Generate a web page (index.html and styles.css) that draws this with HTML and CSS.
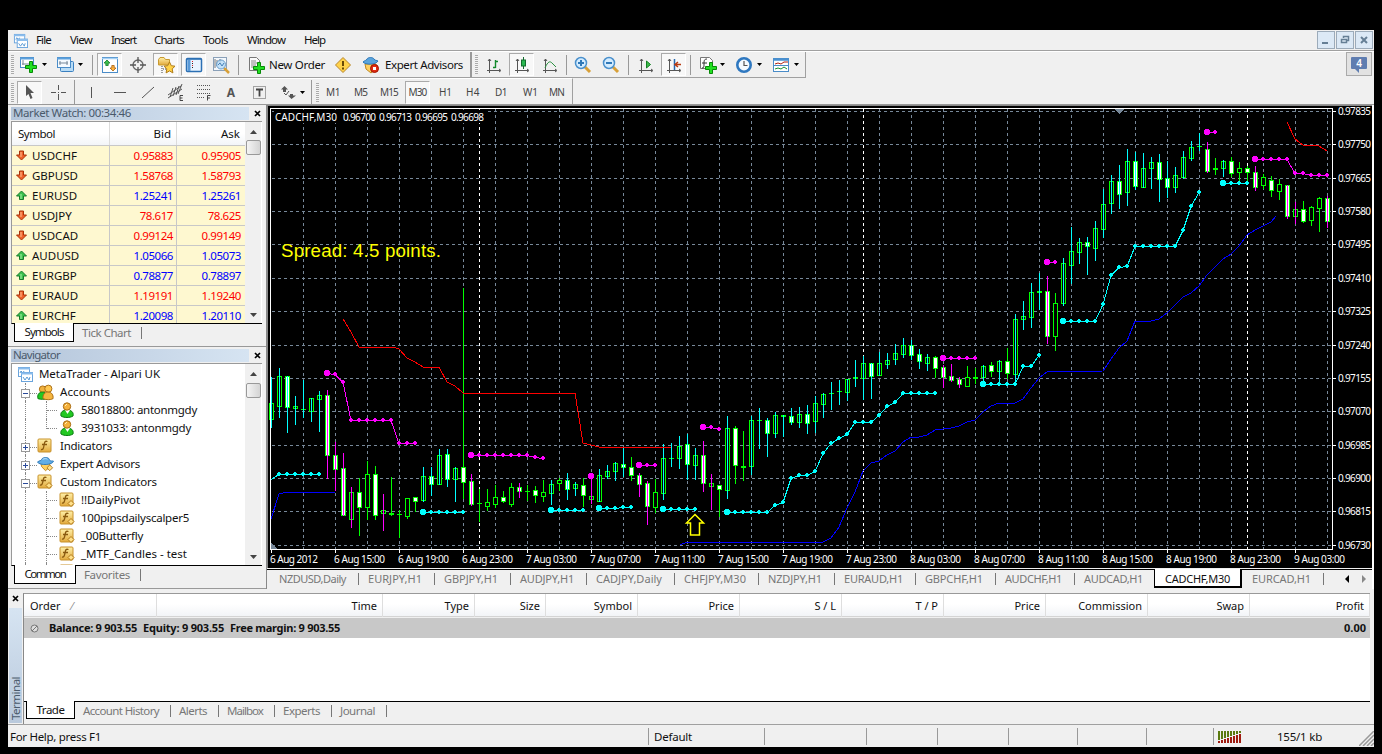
FILE: index.html
```html
<!DOCTYPE html>
<html lang="en">
<head>
<meta charset="utf-8">
<title>MetaTrader - CADCHF,M30</title>
<link rel="stylesheet" href="styles.css">
</head>
<body>
<svg class="defs" width="0" height="0" aria-hidden="true">
  <defs>
    <linearGradient id="gold" x1="0" y1="0" x2="0" y2="1"><stop offset="0" stop-color="#fff0a8"/><stop offset="1" stop-color="#e2a93c"/></linearGradient>
    <symbol id="i-down" viewBox="0 0 11 11"><path d="M3.5 1h4v4h3L5.500 10 .5 5h3z" fill="#f0622a" stroke="#a83208"/><path d="M5 2v5" stroke="#ffc090"/></symbol>
    <symbol id="i-up" viewBox="0 0 11 11"><path d="M3.500 9.500h4V6h3L5.500 1 .5 6h3z" fill="#3cc04e" stroke="#177a2a"/><path d="M5 4v5" stroke="#a8f0a8"/></symbol>
    <symbol id="i-plus" viewBox="0 0 12 12"><path d="M4.500.5h3v4h4v3h-4v4h-3v-4h-4v-3h4z" fill="#22e022" stroke="#078a07"/></symbol>
    <symbol id="i-app" viewBox="0 0 16 16"><rect x="1.500" y="1.500" width="11" height="9" fill="#fff" stroke="#6aa4dc"/><path d="M1 2.500h12" stroke="#8abcec" stroke-width="2"/><path d="M3 7l1-2 2 2 1-2" stroke="#5b9bd5" fill="none"/><rect x="4.500" y="6.500" width="11" height="9" fill="#fff" stroke="#6aa4dc"/><path d="M4 7.500h12" stroke="#8abcec" stroke-width="2"/><path d="M6 11l2 3 2-3 2 3 1-3" stroke="#5b9bd5" fill="none"/></symbol>
    <symbol id="i-man" viewBox="0 0 16 16"><path d="M2 14c-1-4 2-6 6-6s7 2 6 6c-3 2-9 2-12 0z" fill="#22c822" stroke="#0b7a12"/><path d="M6 8l2.500 4L11 8z" fill="#fff"/><circle cx="8" cy="4.500" r="3.700" fill="#f5b13c" stroke="#a86a10"/><path d="M6 4l2-2" stroke="#fff0b8"/></symbol>
    <symbol id="i-people" viewBox="0 0 18 17"><circle cx="6" cy="5" r="3.500" fill="#f0b03c" stroke="#a86a10"/><path d="M1 15c-1-4 1-7 5-7 3 0 5 3 5 7-3 1-7 1-10 0z" fill="#22c822" stroke="#0b7a12"/><circle cx="12" cy="4.500" r="3.800" fill="#ffc850" stroke="#a86a10"/><path d="M6.500 15c-1-4 2-7 5-7 4 0 6 3 5.500 7-3 1.500-7 1.500-10.500 0z" fill="#f5b640" stroke="#a86a10"/></symbol>
    <symbol id="i-f" viewBox="0 0 16 16"><rect x="1" y="1" width="13" height="13" rx="1" fill="url(#gold)" stroke="#c8922c"/><path d="M10.500 3.500c-3-1-3 1-3.500 4s-1 4.500-3 4M5 6.500h5" stroke="#8a5a10" fill="none" stroke-width="1.300"/></symbol>
    <symbol id="i-fc" viewBox="0 0 16 16"><rect x="1" y="1" width="13" height="13" rx="1" fill="url(#gold)" stroke="#c8922c"/><path d="M9.500 3.500c-3-1-3 1-3.500 3.500s-1 4.500-3 4M4 6.500h5" stroke="#8a5a10" fill="none" stroke-width="1.300"/><path d="M12 8.500l3 3-3 3-3-3z" fill="#ffe08a" stroke="#b07818"/></symbol>
    <symbol id="i-ea" viewBox="0 0 18 17"><path d="M4 7h9l1 4-5 4-4-4z" fill="#ffd060" stroke="#c08820"/><path d="M0.500 6c2-2 4-1 4.500-3s7-3 8 0 3 1 4.500 2c-1 4-14 5-17 1z" fill="#62aee6" stroke="#2f78b8"/><path d="M6 3c2-1 4-1 5 0" stroke="#c4e6ff" fill="none"/><path d="M13.500 9l3 3-3 3-3-3z" fill="#ffe08a" stroke="#b07818"/></symbol>
    <symbol id="i-axes" viewBox="0 0 18 18"><path d="M4.500 3v14M2 14.500h13M3 5l1.500-2L6 5M14 13l2 1.500-2 1.500" fill="none" stroke="#555"/></symbol>
    <symbol id="i-dd" viewBox="0 0 5 3"><path d="M0 0h5L2.500 3z" fill="#000"/></symbol>
    <symbol id="i-x" viewBox="0 0 7 7"><path d="M1 1l5 5M6 1L1 6" stroke="#000" stroke-width="1.700"/></symbol>
  </defs>
</svg>

<div class="window">
  <div class="menubar">
    <svg class="menu-icon" width="15" height="15"><use href="#i-app"/></svg>
    <div class="menus">
      <span data-w="15">File</span><span data-w="22">View</span><span data-w="25">Insert</span><span data-w="30">Charts</span><span data-w="25">Tools</span><span data-w="38">Window</span><span data-w="21">Help</span>
    </div>
    <div class="winbtns">
      <svg width="18" height="18"><rect x=".5" y=".5" width="17" height="17"/><path d="M5 12h6" stroke-width="2"/></svg>
      <svg width="18" height="18"><rect x=".5" y=".5" width="17" height="17"/><path d="M7.500 7V5.500h5v4H11M5.500 8.500h5v3h-5z" stroke-width="1.500"/></svg>
      <svg width="18" height="18"><rect x=".5" y=".5" width="17" height="17"/><path d="M6 6l6 6M12 6l-6 6" stroke-width="2"/></svg>
    </div>
  </div>

  <div class="toolzone">
    <div class="toolbars">
      <div class="toolbar main-tools">
        <i class="grip"></i>
        <svg width="18" height="18"><rect x=".5" y="1.500" width="13" height="10" fill="#fff" stroke="#4a8cc8"/><path d="M0 2.500h14" stroke="#5ca0dc" stroke-width="2"/><path d="M3 4v5M2 8h9M9 6l2 2" stroke="#789" fill="none"/><use href="#i-plus" x="5" y="5" width="12" height="12"/></svg>
        <svg class="dd" width="5" height="3"><use href="#i-dd"/></svg>
        <svg width="18" height="18"><rect x="3.500" y="5.500" width="13" height="10" rx="1" fill="#b8dcf6" stroke="#3a80c0"/><rect x=".5" y="1.500" width="13" height="10" fill="#f4faff" stroke="#4a8cc8"/><path d="M0 2.500h14" stroke="#5ca0dc" stroke-width="2"/><path d="M2 7h9M3 5v4M10 5v4" stroke="#789"/></svg>
        <svg class="dd" width="5" height="3"><use href="#i-dd"/></svg>
        <i class="sep"></i>
        <b class="pressed"><svg width="18" height="18"><rect x="1.500" y="1.500" width="15" height="15" fill="#fff" stroke="#4a8cc8"/><path d="M1 2.500h16" stroke="#a4d0f4" stroke-width="1.500"/><path d="M6 4l3 3H7.200v2.500H4.800V7H3z" fill="#3cc04e" stroke="#177a2a" stroke-width=".8"/><path d="M12 15l3-3h-1.800V9.500h-2.400V12H9z" fill="#ffb43c" stroke="#a86010" stroke-width=".8"/></svg></b>
        <svg width="18" height="18"><circle cx="9" cy="9" r="5" fill="none" stroke="#666" stroke-width="1.300"/><path d="M9 1v6M9 11v6M1 9h6M11 9h6" stroke="#555" stroke-width="1.300"/></svg>
        <b class="pressed"><svg width="20" height="18"><path d="M2.500 9V3.500l1.500-2h4l1.500 2h4V9z" fill="url(#gold)" stroke="#c89a30"/><path d="M6 10v7M7 13h4" stroke="#444" stroke-dasharray="1 1"/><path d="M13.500 6l1.800 3.700 3.700.5-2.800 2.700.7 4-3.400-2-3.400 2 .7-4L8 10.200l3.700-.5z" fill="#ffd24a" stroke="#b07c18"/></svg></b>
        <b class="pressed"><svg width="18" height="18"><rect x="1.500" y="2.500" width="15" height="13" rx="1" fill="#e8f4ff" stroke="#2c70b4" stroke-width="1.500"/><path d="M2 3h14" stroke="#2c70b4" stroke-width="1.500"/><path d="M4 4v11" stroke="#5a9ad8" stroke-width="3"/><path d="M7.500 5v1M7.500 9v1" stroke="#e02020"/><path d="M7.500 7v1M7.500 11v1" stroke="#222"/></svg></b>
        <svg width="20" height="18"><rect x="1.500" y="1.500" width="13" height="13" fill="#f4f8fc" stroke="#8aa0b8"/><path d="M3 3v9M5 4v6M8 3v4" stroke="#777"/><path d="M12 12l5 5" stroke="#d8a038" stroke-width="2.500"/><circle cx="9" cy="8.500" r="4.500" fill="#b8dcf8" fill-opacity=".8" stroke="#6a9cc8"/><path d="M6 9l2-2 2 3 2-3" stroke="#4580b8" fill="none"/></svg>
        <i class="sep"></i>
        <svg width="18" height="18"><path d="M1.500 1.500h7l3 3v10h-10z" fill="#fafafa" stroke="#777"/><path d="M3 5h5M3 7h7M3 9h5M3 11h4" stroke="#888"/><use href="#i-plus" x="5" y="6" width="12" height="12"/></svg>
        <span data-w="56">New Order</span>
        <svg width="18" height="18"><path d="M9 1.500L16.500 9 9 16.500 1.500 9z" fill="#ffd24a" stroke="#b8862c" stroke-linejoin="round"/><path d="M9 5v5M9 11.500v2" stroke="#5a3c00" stroke-width="1.800"/></svg>
        <svg width="18" height="18"><path d="M3 8h11l1 4-6 5-5-4z" fill="#ffd060" stroke="#c08820"/><path d="M1 6c2-2 3-1 4-3s6-2 7 0 3 1 4 2c-2 4-13 4-15 1z" fill="#5aa4dc" stroke="#2f78b8"/><circle cx="12.500" cy="12.500" r="4" fill="#e02a10" stroke="#a01400"/><path d="M11 11h3v3h-3z" fill="#fff"/></svg>
        <span data-w="78">Expert Advisors</span>
        <i class="sep thick"></i>
        <i class="grip"></i>
        <svg width="18" height="18"><use href="#i-axes"/><path d="M10.500 4v8M8 11.500h2.500M10.500 5.500H13" stroke="#128a2c" stroke-width="1.400"/></svg>
        <b class="pressed"><svg width="18" height="18"><use href="#i-axes"/><path d="M10.500 1v12" stroke="#126a2c"/><rect x="8.500" y="4" width="4" height="6" fill="#28b850" stroke="#126a2c"/></svg></b>
        <svg width="18" height="18"><use href="#i-axes"/><path d="M4 12c3-7 5-7 7-5l4 4" stroke="#2a9040" fill="none"/></svg>
        <i class="sep"></i>
        <svg width="18" height="18"><path d="M11 11l5 5" stroke="#d8a038" stroke-width="3"/><circle cx="7" cy="7" r="5.500" fill="#d4ecff" stroke="#4a90cc" stroke-width="1.500"/><path d="M4 7h6M7 4v6" stroke="#2f78b8" stroke-width="2"/></svg>
        <svg width="18" height="18"><path d="M11 11l5 5" stroke="#d8a038" stroke-width="3"/><circle cx="7" cy="7" r="5.500" fill="#d4ecff" stroke="#4a90cc" stroke-width="1.500"/><path d="M4 7h6" stroke="#2f78b8" stroke-width="2"/></svg>
        <i class="sep"></i>
        <svg width="18" height="18"><use href="#i-axes"/><path d="M9.500 5v7l4-3.500z" fill="#3cb84a" stroke="#128020"/></svg>
        <b class="pressed"><svg width="18" height="18"><use href="#i-axes"/><path d="M9.500 3v11" stroke="#2468b0" stroke-width="1.500"/><path d="M10 8.500h6M13 6l-3 2.500 3 2.500" stroke="#b83a10" stroke-width="1.500" fill="none"/></svg></b>
        <i class="sep"></i>
        <svg width="18" height="18"><path d="M1.500 1.500h9l3 3v8h-12z" fill="#fff" stroke="#777"/><path d="M8 3c-3 0-3 2-3 5s0 4-2 4M3 7h5" stroke="#333" fill="none"/><use href="#i-plus" x="6" y="6" width="12" height="12"/></svg>
        <svg class="dd" width="5" height="3"><use href="#i-dd"/></svg>
        <svg width="18" height="18"><circle cx="9" cy="9" r="6.700" fill="#f4faff" stroke="#2f78c0" stroke-width="2.600"/><path d="M9 5v4.500h3.500" stroke="#555" fill="none" stroke-width="1.200"/></svg>
        <svg class="dd" width="5" height="3"><use href="#i-dd"/></svg>
        <svg width="18" height="18"><rect x="1.500" y="2.500" width="15" height="13" fill="#fff" stroke="#4a8cc8"/><path d="M1 3.500h16" stroke="#4a90d0" stroke-width="2.500"/><path d="M3 8l3-1 3 1 3-2h4" stroke="#b02010" fill="none"/><path d="M1 9.500h16" stroke="#4a8cc8"/><path d="M3 13l3-1 3 1 3-2 3 2" stroke="#189030" fill="none"/></svg>
        <svg class="dd" width="5" height="3"><use href="#i-dd"/></svg>
      </div>

      <div class="toolbar line-tools">
        <i class="grip"></i>
        <b class="pressed"><svg width="18" height="18"><path d="M5 2l8 8H9.500l2 5-2 1-2-5L5 13z" fill="#555"/></svg></b>
        <svg width="18" height="18"><path d="M9.500 2v5M9.500 11v6M2 9.500h5M12 9.500h5M9 9.500h1" stroke="#555"/></svg>
        <i class="sep"></i>
        <svg width="18" height="18"><path d="M9.500 4v11" stroke="#555"/></svg>
        <svg width="18" height="18"><path d="M3 9.500h12" stroke="#555"/></svg>
        <svg width="18" height="18"><path d="M3 15L15 4" stroke="#555"/></svg>
        <svg width="18" height="18"><path d="M1 12L14 3M1 15L15 6M3 14L6 5M6 13l3-9M9 12l3-9M11 11l4-10" stroke="#555"/><path d="M16 12.500h-3v5h3M13 15h2.500" stroke="#444" fill="none"/></svg>
        <svg width="18" height="18"><path d="M2 2.500h14M2 6.500h14M2 10.500h14M2 14.500h8" stroke="#555" stroke-dasharray="1 1"/><path d="M15.500 12.500h-3v5M12.500 15h2.500" stroke="#444" fill="none"/></svg>
        <em>A</em>
        <svg width="18" height="18"><rect x="2.500" y="3.500" width="12" height="12" fill="none" stroke="#555" stroke-dasharray="1 1"/><path d="M5 6.500h7M8.500 6v7.500" stroke="#444" stroke-width="1.800"/></svg>
        <svg width="18" height="18"><path d="M5.500 3L9 6.500H7V9H4V6.500H2zM12.500 16L9 12.500h2V11h3v1.500h3z" fill="#555"/><path d="M5 10l2 2 3-4" stroke="#555" fill="none"/></svg>
        <svg class="dd" width="5" height="3"><use href="#i-dd"/></svg>
        <i class="sep"></i>
        <i class="grip"></i>
        <span data-w="14">M1</span><span data-w="13">M5</span><span data-w="18">M15</span><b class="pressed"><span data-w="18">M30</span></b><span data-w="13">H1</span><span data-w="14">H4</span><span data-w="12">D1</span><span data-w="15">W1</span><span data-w="15">MN</span>
      </div>
    </div>
    <div class="alerts"><svg width="16" height="17"><path d="M1 0h14q1 0 1 1v10q0 1-1 1H8l0 4-4-4H1q-1 0-1-1V1q0-1 1-1z" fill="#5f7db0"/><text x="8" y="10" text-anchor="middle">4</text></svg></div>
  </div>

  <div class="workspace">
    <div class="sidebar">
      <section class="panel watch">
        <header><h2><span data-w="118">Market Watch: 00:34:46</span></h2><svg width="7" height="7"><use href="#i-x"/></svg></header>
        <div class="box">
          <div class="list">
            <div class="row head"><span><span data-w="37">Symbol</span></span><span>Bid</span><span>Ask</span></div>
            <div id="quotes"></div>
          </div>
          <div class="scroll"><svg width="7" height="4"><path d="M3.500 0L7 4H0z"/></svg><i></i><svg width="7" height="4"><path d="M0 0h7L3.500 4z"/></svg></div>
        </div>
        <footer><span class="on"><span data-w="39">Symbols</span></span><span class="off"><span data-w="49">Tick Chart</span></span></footer>
      </section>
      <section class="panel nav">
        <header><h2><span data-w="47">Navigator</span></h2><svg width="7" height="7"><use href="#i-x"/></svg></header>
        <div class="box">
          <div class="tree" id="tree"></div>
          <div class="scroll"><svg width="7" height="4"><path d="M3.500 0L7 4H0z"/></svg><i></i><svg width="7" height="4"><path d="M0 0h7L3.500 4z"/></svg></div>
        </div>
        <footer><span class="on"><span data-w="41">Common</span></span><span class="off"><span data-w="46">Favorites</span></span></footer>
      </section>
    </div>
    <div class="chartpane">
      <svg id="chart" width="1105" height="463" viewBox="267 105 1105 463"></svg>
      <div class="charttabs">
        <span data-w="67">NZDUSD,Daily</span><span data-w="54">EURJPY,H1</span><span data-w="54">GBPJPY,H1</span><span data-w="54">AUDJPY,H1</span><span data-w="66">CADJPY,Daily</span><span data-w="62">CHFJPY,M30</span><span data-w="54">NZDJPY,H1</span><span data-w="59">EURAUD,H1</span><span data-w="58">GBPCHF,H1</span><span data-w="57">AUDCHF,H1</span><span data-w="59">AUDCAD,H1</span><span class="current"><span data-w="65">CADCHF,M30</span></span><span data-w="59">EURCAD,H1</span>
        <svg width="22" height="8"><path d="M4 0v8L0 4z" fill="#000"/><path d="M17 0v8l4-4z" fill="#888"/></svg>
      </div>
    </div>
  </div>

  <div class="terminal">
    <div class="spine"><svg width="7" height="7"><use href="#i-x"/></svg><div><span>Terminal</span></div></div>
    <div class="orders">
      <div class="cols"><span>Order<i>⁄</i></span><span>Time</span><span>Type</span><span>Size</span><span>Symbol</span><span>Price</span><span>S / L</span><span>T / P</span><span>Price</span><span>Commission</span><span>Swap</span><span>Profit</span></div>
      <div class="balance"><svg width="9" height="9"><circle cx="4.500" cy="4.500" r="3.500"/><path d="M2 7l5-5"/></svg><span data-w="88">Balance: 9 903.55</span><span data-w="81">Equity: 9 903.55</span><span data-w="110">Free margin: 9 903.55</span><span>0.00</span></div>
      <div class="blank"></div>
      <div class="termtabs"><span class="on"><span data-w="28">Trade</span></span><span data-w="76">Account History</span><span data-w="28">Alerts</span><span data-w="36">Mailbox</span><span data-w="37">Experts</span><span data-w="35">Journal</span></div>
    </div>
  </div>

  <div class="status">
    <span><b data-w="91">For Help, press F1</b></span><span><b data-w="38">Default</b></span><span></span><span></span><span></span><span></span><span></span><span></span>
    <span class="net"><svg id="bars" width="24" height="13"></svg><b data-w="45">155/1 kb</b><svg class="corner" width="15" height="15"><path d="M0 15L15 0M4 15L15 4M8 15l7-7M12 15l3-3" stroke="#999" stroke-width="1.500"/></svg></span>
  </div>
</div>
<script src="app.js"></script>
</body>
</html>
```
FILE: styles.css
```css
* { box-sizing: border-box; }
body { margin: 0; background: #000; font: 11.5px/16px "Noto Sans", "Open Sans", sans-serif; color: #111; overflow: hidden; height: 754px; }
svg { display: block; flex: none; }
i, em, b { font-style: normal; font-weight: normal; }
[data-w] { white-space: nowrap; display: inline-block; flex: none; }
.defs { position: absolute; }
.window { margin: 30px 8px 0; width: 1366px; height: 717px; background: #f0f0f0; display: flex; flex-direction: column; overflow: hidden; }

.menubar { height: 21px; border-bottom: 1px solid #a0a0a0; display: flex; align-items: center; flex: none; }
.menu-icon { margin-left: 5px; }
.menus { display: grid; grid-template-columns: 34px 41px 43px 49px 44px 57px 30px; margin-left: 8px; flex: 1; }
.winbtns { display: flex; gap: 1px; padding-right: 1px; }
.winbtns svg { fill: none; stroke: #667f95; }
.winbtns rect { fill: #dce9f6; stroke: #9cabba; }

.toolzone { height: 54px; border-top: 1px solid #fff; border-bottom: 1px solid #999; display: flex; justify-content: space-between; flex: none; }
.toolbar { display: grid; justify-items: start; align-items: center; padding-left: 3px; border-right: 1px solid #a0a0a0; width: max-content; }
.main-tools { height: 26px; border-bottom: 1px solid #a0a0a0; grid-template-columns: 9px 22px 15px 21px 14px 5px 32px 24px 28px 31px 26px 10px 21px 65px 28px 23px 85px 5px 10px 24px 32px 25px 8px 28px 26px 9px 24px 29px 9px 21px 15px 22px 15px 22px 11px; }
.line-tools { height: 26px; border-top: 1px solid #fff; padding-top: 1px; grid-template-columns: 6px 32px 25px 8px 29px 28px 28px 28px 27px 29px 28px 21px 11px 5px 10px 28px 26px 25px 34px 27px 29px 28px 26px 23px; font-size: 10px; color: #444; }
.grip { width: 3px; height: 19px; background: repeating-linear-gradient(#aaa 0 1px, #f4f4f4 1px 2px); }
.sep { width: 1px; height: 20px; background: #999; }
.sep.thick { width: 2px; height: 25px; }
.line-tools .sep { height: 24px; }
.pressed { width: 25px; height: 23px; border: 1px solid #aaa; border-right-color: #fff; border-bottom-color: #fff; background: #f8f8f8; display: flex; align-items: center; justify-content: center; }
.line-tools em { width: 18px; text-align: center; font: bold 12px "Noto Sans", sans-serif; color: #555; }
.alerts { width: 26px; height: 24px; margin: 0 2px 0 0; border: 1px solid #aaa; background: #e2e2e2; display: flex; justify-content: center; padding-top: 4px; }
.alerts svg { overflow: visible; }
.alerts text { font: 600 10px "Noto Sans", sans-serif; fill: #fff; }

.workspace { display: flex; height: 484px; flex: none; }
.sidebar { width: 259px; border-right: 1px solid #888; display: flex; flex-direction: column; }
.panel { display: flex; flex-direction: column; padding: 2px 3px 0; border-bottom: 1px solid #999; flex: none; }
.watch { height: 242px; }
.nav { height: 242px; padding-top: 2px; }
.panel header { display: flex; align-items: center; height: 13px; flex: none; margin-bottom: 1px; }
.panel h2 { margin: 0; width: 238px; height: 13px; font: 11.500px/12px "Noto Sans", sans-serif; color: #4a5a6c; padding-left: 2px; background: linear-gradient(90deg, #b4c5da, #d6e4f2); }
.panel header svg { margin-left: 5px; }
.panel .box { display: flex; border: 1px solid #999; border-width: 1px 0 0 1px; border-bottom: 1px solid #000; width: 251px; background: #fff; overflow: hidden; flex: none; }
.watch .box { height: 203px; }
.nav .box { height: 203px; }
.list { width: 233px; flex: none; }
.row { display: grid; grid-template-columns: 98px 67px 68px; height: 20px; line-height: 19px; background: #fef8d0; border-bottom: 1px solid #c8c8c8; }
.row > span { text-align: right; padding-right: 3px; border-right: 1px solid #c8c8c8; }
.row > span:last-child { padding-right: 4px; border-right: 0; }
.row > span:first-child { text-align: left; display: flex; align-items: center; gap: 5px; padding-left: 4px; }
.row > span + span { letter-spacing: -.45px; }
.row.head > span + span { letter-spacing: 0; }
.row.head { height: 24px; line-height: 23px; background: linear-gradient(#fff 50%, #f3f5f8); border-bottom: 1px solid #c8c8c8; }
.row.head > span { border-color: #dcdcdc; padding-right: 5px; }
.row.head > span:first-child { padding-left: 6px; display: block; }
.fall > span + span { color: #f00; }
.rise > span + span { color: #00f; }
.scroll { width: 16px; background: #f0f0f0; display: flex; flex-direction: column; align-items: center; padding: 8px 0 6px; fill: #444; flex: none; }
.scroll i { width: 15px; height: 15px; border: 1px solid #999; border-radius: 2px; background: linear-gradient(90deg, #f4f4f4, #d4d4d4); margin: 6px 0 auto; }
.nav .scroll i { margin-top: 7px; }
.panel footer { display: flex; padding-left: 3px; height: 19px; }
.on { background: #fff; border: 1px solid #000; border-top: 0; height: 19px; display: flex; justify-content: center; margin-top: -1px; line-height: 18px; }
.watch .on { width: 60px; }
.nav .on { width: 62px; }
.off { margin-left: 8px; color: #777; line-height: 18px; height: 19px; padding-right: 10px; position: relative; }
.off::after, .termtabs > [data-w]::after, .charttabs > [data-w]::after { content: ""; position: absolute; right: -1px; top: 3px; height: 12px; width: 1px; background: #777; }

.tree { width: 233px; padding-top: 1px; flex: none; }
.leaf { height: 18px; display: flex; align-items: center; position: relative; }
.leaf .glyph { width: 18px; display: flex; justify-content: center; }
.leaf span { margin-left: 5px; }
.d0 { padding-left: 4px; }
.d1 { padding-left: 25px; }
.d2 { padding-left: 46px; }
.d1 .glyph { margin-left: -1px; }
.d1 span { margin-left: 6px; }
.branch { position: absolute; left: 13px; top: 0; width: 12px; height: 18px; border-left: 1px dotted #888; }
.branch::after { content: ""; position: absolute; left: 0; right: 0; top: 10px; border-top: 1px dotted #888; }
.d2 .branch::after { display: none; }
.twig { position: absolute; left: 34px; top: 0; width: 11px; height: 18px; border-left: 1px dotted #888; }
.twig::after { content: ""; position: absolute; left: 0; right: 0; top: 9px; border-top: 1px dotted #888; }
.twig.end { height: 10px; }
.toggle { position: absolute; left: 9px; top: 6px; }

.chartpane { width: 1107px; display: flex; flex-direction: column; border-right: 2px solid #fff; }
.charttabs { height: 20px; margin-top: 1px; border-top: 1px solid #000; display: flex; padding-left: 12px; color: #777; line-height: 17px; font-size: 11px; }
.charttabs > [data-w] { position: relative; margin-right: 22px; }
.charttabs > [data-w]::after { right: -13px; }
.charttabs > [data-w]:nth-child(11) { margin-right: 11px; }
.charttabs > [data-w]:nth-child(11)::after { display: none; }
.charttabs > .current + [data-w] { margin-left: 10px; }
.current { width: 88px; height: 19px; margin-top: -1px; background: #fff; border: 1px solid #000; border-top: 0; border-right-width: 2px; border-bottom-width: 2px; color: #111; display: flex; justify-content: center; line-height: 19px; }
.charttabs > svg { margin: 5px 5px 0 auto; }
#chart { background: #000; shape-rendering: crispEdges; }
#chart text { font: 10px "Noto Sans", sans-serif; fill: #fff; }
#chart .spread { font: 18.700px "Liberation Sans", sans-serif; fill: #ff0; }

.terminal { display: flex; height: 135px; border-bottom: 1px solid #a0a0a0; padding-top: 3px; flex: none; margin-top: 1px; }
.spine { width: 15px; padding-left: 1px; flex: none; }
.spine svg { margin: 2px 0 6px 3px; }
.spine div { width: 13px; height: 115px; background: linear-gradient(#d6e4f2, #b9c9dc); display: flex; }
.spine span { writing-mode: vertical-rl; transform: rotate(180deg); color: #4a5a6c; line-height: 13px; padding-top: 3px; letter-spacing: -.5px; }
.orders { flex: 1; border-left: 1px solid #888; border-top: 1px solid #999; margin-right: 4px; display: flex; flex-direction: column; background: #f0f0f0; }
.cols { display: grid; grid-template-columns: 133px 226px 92px 71px 92px 102px 102px 102px 102px 102px 102px 1fr; height: 23px; line-height: 23px; background: linear-gradient(#fff 45%, #f2f4f7); border-bottom: 1px solid #d4d4d4; font-size: 11px; }
.cols span { text-align: right; padding-right: 5px; border-right: 1px solid #dedede; }
.cols span:first-child { text-align: left; padding-left: 6px; }
.cols i { margin-left: 11px; color: #888; }
.balance { height: 20px; margin-top: 1px; background: #c8c8c8; display: flex; align-items: center; font-weight: 700; font-size: 11px; line-height: 18px; padding: 0 4px 0 6px; flex: none; }
.balance svg { margin-right: 10px; fill: #ddd; stroke: #777; }
.balance span { margin-right: 6px; }
.balance span:last-child { margin: 0 0 0 auto; }
.blank { background: #fff; flex: 1; border-bottom: 1px solid #000; }
.termtabs { display: flex; height: 22px; padding-left: 2px; color: #777; line-height: 18px; }
.termtabs .on { width: 49px; color: #111; height: 18px; margin-right: 8px; }
.termtabs > [data-w] { position: relative; margin-right: 20px; }
.termtabs > [data-w]::after { right: -12px; }

.status { display: grid; grid-template-columns: 641px 116px 102px 71px 71px 69px 69px 67px 1fr; height: 21px; padding-top: 3px; flex: none; }
.status > span { border-right: 1px solid #999; height: 17px; padding-left: 5px; line-height: 18px; }
.status > span:first-child { padding-left: 2px; }
.status > .net { border: 0; display: flex; height: 18px; padding-left: 4px; }
.net b { margin-left: 35px; }
.net svg:first-child { margin-top: 3px; }
.corner { margin: 3px 0 0 auto; }
```
FILE: app.js
```js
/* Market watch */
const quotes = [
  ['USDCHF', '0.95883', '0.95905', 0], ['GBPUSD', '1.58768', '1.58793', 0], ['EURUSD', '1.25241', '1.25261', 1],
  ['USDJPY', '78.617', '78.625', 0], ['USDCAD', '0.99124', '0.99149', 0], ['AUDUSD', '1.05066', '1.05073', 1],
  ['EURGBP', '0.78877', '0.78897', 1], ['EURAUD', '1.19191', '1.19240', 0], ['EURCHF', '1.20098', '1.20110', 1]
];
document.getElementById('quotes').innerHTML = quotes.map(([s, b, a, up]) =>
  `<div class="row ${up ? 'rise' : 'fall'}"><span><svg width="11" height="11"><use href="#i-${up ? 'up' : 'down'}"/></svg>${s}</span><span>${b}</span><span>${a}</span></div>`).join('');

/* Navigator tree: depth, icon, label, width, toggle sign */
const tree = [
  [0, 'app', 'MetaTrader - Alpari UK', 121], [1, 'people', 'Accounts', 50, '-'],
  [2, 'man', '58018800: antonmgdy', 116], [2, 'man', '3931033: antonmgdy', 110, 'end'],
  [1, 'f', 'Indicators', 52, '+'], [1, 'ea', 'Expert Advisors', 80, '+'], [1, 'fc', 'Custom Indicators', 97, '-'],
  [2, 'fc', '!!DailyPivot', 59], [2, 'fc', '100pipsdailyscalper5', 108], [2, 'fc', '_00Butterfly', 62],
  [2, 'fc', '_MTF_Candles - test', 106], [2, 'fc', '', 0]
];
document.getElementById('tree').innerHTML = tree.map(([d, icon, label, w, t]) => {
  let deco = d ? '<i class="branch"></i>' : '';
  if (d === 2) deco += `<i class="twig ${t === 'end' ? 'end' : ''}"></i>`;
  if (d === 1) deco += `<svg class="toggle" width="9" height="9"><rect x=".5" y=".5" width="8" height="8" fill="#fff" stroke="#999"/><path d="M2 4.500h5${t === '+' ? 'M4.500 2v5' : ''}" stroke="#2a4a9a"/></svg>`;
  const s = d === 1 && icon !== 'f' && icon !== 'fc' ? 17 : 16;
  return `<div class="leaf d${d}">${deco}<i class="glyph"><svg width="${s}" height="${s}"><use href="#i-${icon}"/></svg></i>${w ? `<span data-w="${w}">${label}</span>` : ''}</div>`;
}).join('');

/* Candles: high, low, body top, body bottom, style (h hollow, f filled), wick colour */
const candles = `377 427 403 419 hc|368 417 376 406 hc|376 432 376 407 fc|396 424 406 408 hc|380 417 409 409 hc|398 421 398 411 hc|391 431 395 399 hc|390 478 395 455 fm|442 490 455 469 fm|453 515 468 515 fm|487 527 492 519 hm|478 535 492 507 fg|461 519 474 507 hg|466 519 474 515 fg|494 530 510 513 hm|477 515 513 514 hg|510 537 514 514 hg|498 518 498 516 hg|497 511 497 501 fg|467 501 476 500 hc|467 495 476 484 fc|449 484 455 484 hc|449 486 454 479 fc|467 501 468 479 hc|288 498 467 482 fg|474 505 481 504 fm|489 521 503 503 hg|489 510 502 506 hg|485 507 497 504 hg|491 502 497 501 fg|483 506 487 504 hg|483 497 487 491 fm|485 500 491 491 hg|486 502 490 495 fg|480 501 492 496 hg|480 504 484 493 hc|478 490 480 483 hg|473 499 480 489 fc|482 495 484 488 hc|478 506 485 495 fg|478 503 496 499 hm|469 501 475 501 hc|465 478 471 476 hc|462 480 463 471 hc|447 476 464 467 fc|457 480 467 475 fg|473 496 475 484 fm|481 524 483 506 fm|479 512 492 507 hg|444 499 458 493 hc|443 466 458 458 hc|436 468 446 458 hc|434 479 444 464 fc|448 479 455 465 hc|441 491 455 483 fm|474 509 483 486 hm|485 516 485 489 fg|416 498 428 490 hc|426 483 428 465 fg|431 480 466 467 hg|416 474 420 466 hc|408 448 420 420 hc|418 456 420 433 fc|412 437 415 433 hc|415 436 415 416 hc|408 424 416 422 fc|407 427 414 422 hc|405 433 414 423 fc|396 432 403 421 hc|393 417 394 404 hc|382 409 393 393 hc|380 404 391 391 hc|379 400 379 392 hc|360 386 377 378 hc|356 399 363 378 hc|363 398 363 376 fc|352 375 363 375 hc|353 368 360 364 hc|344 364 353 359 hc|338 357 345 354 hc|340 359 345 355 fc|349 368 354 361 fc|354 370 357 363 hc|356 377 357 368 fg|365 387 367 377 fm|364 381 376 380 fm|377 387 379 384 fm|366 386 377 386 hg|368 383 377 378 hg|365 380 366 377 hc|362 376 365 371 fg|360 383 361 371 hc|348 378 361 373 fg|314 383 319 374 hc|301 329 316 319 hc|283 327 292 317 hc|273 309 291 292 hc|276 343 291 336 fm|293 350 303 336 hg|258 305 263 303 hc|227 283 251 265 hc|238 263 242 252 hc|237 274 242 246 fc|221 260 228 248 hc|189 237 204 229 hc|175 213 181 203 hc|165 208 181 194 fc|149 205 161 192 hc|152 189 161 186 fc|153 187 168 187 hc|157 188 162 168 hc|154 201 162 179 fc|161 197 178 187 fc|167 192 175 187 hc|151 178 157 177 hc|141 160 147 158 hc|133 150 146 146 hc|142 172 149 171 fm|158 174 168 169 hg|160 176 161 168 hc|157 176 161 173 fg|162 181 168 172 hg|166 182 168 172 fg|166 190 172 187 fm|174 188 177 185 hg|176 196 180 190 fg|179 199 184 191 hg|185 218 185 216 fm|202 223 209 216 hm|201 222 209 221 fg|206 225 207 220 hg|197 231 198 208 hg|196 227 198 221 fm`;

/* Stop levels: start x, then one y per bar */
const rep = (y, n) => Array(n).fill(y);
const magenta = [
  [327, 373, 374, 382, ...rep(420, 6), 443, 443, 443], [471, ...rep(455, 8), 457, 458], [591, 476], [639, 465, 465, 465],
  [703, 427, 427, 429], [943, ...rep(358, 5)], [1047, 262, 262], [1207, 132, 132], [1255, ...rep(159, 5), 173, 173, 175, 175, 175]
];
const cyan = [
  [271, 479, ...rep(474, 6)], [423, ...rep(512, 6)], [551, ...rep(510, 5)], [599, 508, 508, 508, 507, 507], [663, ...rep(509, 5)],
  [727, ...rep(512, 6), 505, 502, 478, 475, 475, 471, 453, 443, 438, 434, 422, 422, 422, 415, 406, 402, ...rep(393, 5)],
  [983, ...rep(384, 5), 366, 366, 355], [1063, ...rep(321, 5), 304, 275, 267, 266, ...rep(246, 6), 230, 206, 192], [1223, ...rep(183, 4)]
];
const red = ['343,319 351,332 359,347 393,347 399,349 407,358 415,362 423,367 439,367 447,382 455,386 463,393 575,393 583,443 591,445 599,447 671,447', '1287,122 1295,139 1303,145 1319,146 1327,151'];
const blue = ['271,519 279,494 287,492 335,492', '680,545 687,542 823,542 831,538 839,527 847,508 855,492 863,471 871,463 879,461 887,455 895,451 903,442 911,437 919,437 927,435 935,430 943,429 951,428 959,426 967,422 975,420 983,412 991,406 999,403 1015,403 1023,399 1031,388 1039,378 1047,372 1103,371 1111,359 1119,348 1127,341 1135,321 1151,321 1159,319 1167,313 1175,305 1183,297 1191,293 1199,286 1207,275 1215,267 1223,259 1231,254 1239,246 1247,235 1255,230 1263,226 1271,222 1276,216'];

let out = '';
const line = (x1, y1, x2, y2, c, extra = '') => `<path d="M${x1} ${y1}L${x2} ${y2}" stroke="${c}" ${extra}/>`;
out += '<path d="M267 105.500H1372M267.500 105V568" stroke="#888"/>';
for (let k = 0; k < 14; k++) {
  const y = Math.round(111 + k * 33.36) + .5;
  out += line(272, y, 1332, y, '#778899', 'stroke-dasharray="3 3"') + line(1332, y, 1336, y, '#fff');
}
for (let x = 303; x < 1332; x += 32) out += line(x + .5, 109, x + .5, 549, '#778899', 'stroke-dasharray="3 3"');
for (const x of [479, 863, 1247]) out += line(x + .5, 109, x + .5, 549, '#fff', 'stroke-dasharray="3 3"');
out += '<path d="M1114 109h10l-5 5zM271 543v6h6z" fill="#778899"/>';

const wick = { c: '#0ff', m: '#f0f', g: '#0f0' };
candles.split('|').forEach((row, i) => {
  const [hi, lo, top, bot, kind] = row.split(' ');
  const x = 271 + i * 8, h = +hi, l = +lo, t = +top, b = +bot;
  out += line(x + .5, h, x + .5, l + 1, '#0f0');
  if (b - t < 2) out += `<rect x="${x - 2}" y="${t}" width="5" height="${b - t + 1}" fill="#0f0"/>`;
  else out += `<rect x="${x - 1.5}" y="${t + .5}" width="4" height="${b - t}" fill="${kind[0] === 'f' ? '#fff' : '#000'}" stroke="#0f0"/>`;
  if (kind[1] !== 'g') out += line(x + .5, h, x + .5, l + 1, wick[kind[1]]);
});
for (const p of red) out += `<polyline points="${p}" fill="none" stroke="#f00"/>`;
for (const p of blue) out += `<polyline points="${p}" fill="none" stroke="#00f"/>`;
for (const [set, c] of [[magenta, '#f0f'], [cyan, '#0ff']]) {
  for (const [x0, ...ys] of set) {
    out += `<polyline points="${ys.map((y, i) => `${x0 + i * 8},${y + .5}`).join(' ')}" fill="none" stroke="${c}"/>`;
    ys.forEach((y, i) => {
      const x = x0 + i * 8;
      if (i === 0) { if (x0 > 271) out += `<circle cx="${x}" cy="${y}" r="3" fill="${c}"/>`; }
      else out += `<path d="M${x - 2} ${y - 1}h1v-1h2v1h1v2h-1v1h-2v-1h-1z" fill="${c}"/>`;
    });
  }
}
out += '<path d="M695 514.500l8.500 8.500h-4v12h-9v-12h-4z" fill="none" stroke="#ff0" stroke-width="1.500" shape-rendering="auto"/>';
out += '<path d="M270.500 549V108.500H1332.500V549.500H270" fill="none" stroke="#fff"/>';
const times = ['6 Aug 2012', '6 Aug 15:00', '6 Aug 19:00', '6 Aug 23:00', '7 Aug 03:00', '7 Aug 07:00', '7 Aug 11:00', '7 Aug 15:00', '7 Aug 19:00', '7 Aug 23:00', '8 Aug 03:00', '8 Aug 07:00', '8 Aug 11:00', '8 Aug 15:00', '8 Aug 19:00', '8 Aug 23:00', '9 Aug 03:00'];
times.forEach((t, i) => {
  const x = 270 + i * 64;
  out += line(x + 1.5, 549, x + 1.5, 553, '#fff') + `<text x="${x}" y="562.500" textLength="${i ? 51 : 48}">${t}</text>`;
});
for (let k = 0; k < 14; k++)
  out += `<text x="1338" y="${Math.round(111 + k * 33.36) + 3.5}" textLength="33">${(0.97835 - k * .00085).toFixed(5)}</text>`;
out += '<rect x="274" y="110" width="212" height="13" fill="#000"/><text x="275" y="120.500" textLength="62">CADCHF,M30</text>';
['0.96700', '0.96713', '0.96695', '0.96698'].forEach((v, i) => { out += `<text x="${343 + i * 36}" y="120.500" textLength="33">${v}</text>`; });
out += '<text class="spread" x="281" y="257" textLength="160">Spread: 4.5 points.</text>';
document.getElementById('chart').innerHTML = out;

/* Connection bars */
let bars = '';
for (let i = 0; i < 8; i++) {
  const split = 9 - i;
  bars += `<rect x="${i * 3}" y="0" width="2" height="${split}" fill="#5a7a10"/><rect x="${i * 3}" y="${split + 1}" width="2" height="${11 - split}" fill="#a01c10"/>`;
}
document.getElementById('bars').innerHTML = bars;

document.querySelectorAll('[data-w]').forEach(el => {
  const range = document.createRange();
  range.selectNodeContents(el);
  const r = range.getBoundingClientRect().width, n = el.textContent.length;
  el.style.letterSpacing = ((+el.dataset.w - r) / n).toFixed(3) + 'px';
  el.style.width = el.dataset.w + 'px';
});
```
